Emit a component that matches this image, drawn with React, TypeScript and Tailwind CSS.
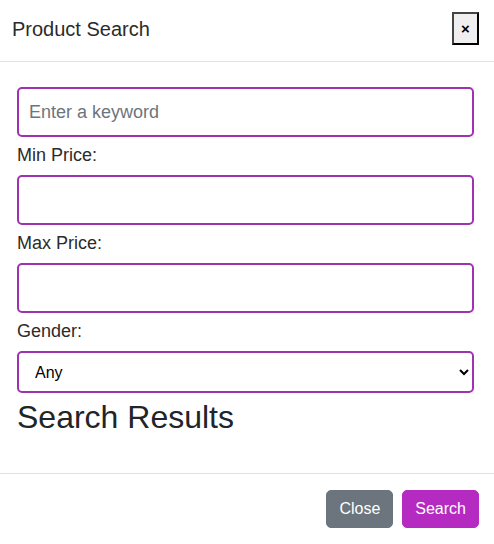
import React from "react";

export default function App() {
  const font = { fontFamily: '"Liberation Sans", Arial, sans-serif' };
  return (
    <div className="w-[494px] h-[544px] bg-white flex flex-col text-[#2b2b2b]" style={font}>
      <div className="h-[62px] shrink-0 flex items-start justify-between pl-[12px] pr-[15px] pt-[12px] border-b border-[#dee2e6]">
        <h5 className="text-[20px] leading-[24px] m-0 mt-[5px]">Product Search</h5>
        <button className="w-[27px] h-[33px] bg-[#efefef] border-2 border-t-[#444] border-l-[#444] border-r-black border-b-black flex items-center justify-center text-[15px] font-bold text-black leading-none">
          ×
        </button>
      </div>
      <div className="flex-1 px-[17px] pt-[25px]">
        <input
          className="block w-[457px] h-[50px] border-2 border-[#a032b2] rounded-[5px] px-[10px] text-[18px] placeholder:text-[#6c757d] outline-none"
          placeholder="Enter a keyword"
        />
        <label className="block mt-[5px] mb-[6px] text-[18px] leading-[27px]">Min Price:</label>
        <input className="block w-[457px] h-[50px] border-2 border-[#a032b2] rounded-[5px] px-[10px] text-[18px] outline-none" />
        <label className="block mt-[5px] mb-[6px] text-[18px] leading-[27px]">Max Price:</label>
        <input className="block w-[457px] h-[50px] border-2 border-[#a032b2] rounded-[5px] px-[10px] text-[18px] outline-none" />
        <label className="block mt-[5px] mb-[6px] text-[18px] leading-[27px]">Gender:</label>
        <select
          className="block w-[457px] h-[42px] border-2 border-[#a032b2] rounded-[5px] pl-[12px] pr-[2px] text-[16px] text-black bg-white outline-none"
          defaultValue="Any"
        >
          <option>Any</option>
          <option>Male</option>
          <option>Female</option>
        </select>
        <h2 className="mt-[5px] text-[32px] leading-[38px] font-normal text-[#212529]">Search Results</h2>
      </div>
      <div className="h-[71px] shrink-0 border-t border-[#dee2e6] flex items-center justify-end gap-[9px] pr-[15px]">
        <button className="h-[38px] px-[12px] rounded-[5px] bg-[#6c757d] text-white text-[16px] border border-[#6c757d]">
          Close
        </button>
        <button className="h-[38px] px-[12px] rounded-[5px] bg-[#b52ac0] text-white text-[16px] border border-[#b52ac0]">
          Search
        </button>
      </div>
    </div>
  );
}
